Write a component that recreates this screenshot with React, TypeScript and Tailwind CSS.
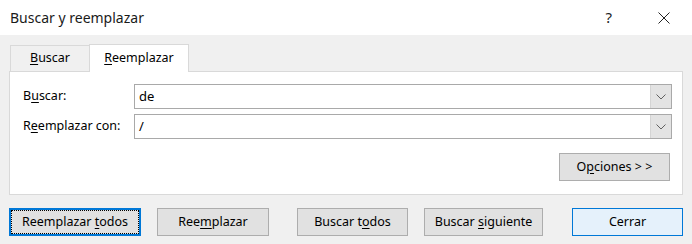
import React from 'react';

const font = { fontFamily: '"Noto Sans", "Open Sans", sans-serif' };

function Key({ children }: { children: React.ReactNode }) {
  return <span className="underline underline-offset-2">{children}</span>;
}

function Chevron() {
  return (
    <svg width="10" height="6" viewBox="0 0 10 6" fill="none">
      <path d="M0.5 0.5 L5 5 L9.5 0.5" stroke="#606060" strokeWidth="1" />
    </svg>
  );
}

function Combo({ value }: { value: string }) {
  return (
    <div className="flex h-[25px] flex-1 border border-[#a9a9a9] bg-white">
      <div className="flex flex-1 items-center pl-[4px] text-[13px] text-black">{value}</div>
      <div className="flex w-[21px] items-center justify-center border-l border-[#d4d4d4] bg-[#e3e3e3]">
        <Chevron />
      </div>
    </div>
  );
}

function Btn({
  children,
  className = '',
}: {
  children: React.ReactNode;
  className?: string;
}) {
  return (
    <div
      className={`flex h-[28px] items-center justify-center border border-[#adadad] bg-[#e1e1e1] text-[12.5px] text-black ${className}`}
    >
      {children}
    </div>
  );
}

export default function App() {
  return (
    <div className="flex h-[244px] w-[692px] flex-col bg-[#f0f0f0] text-black" style={font}>
      {/* Title bar */}
      <div className="flex h-[35px] items-center bg-white pl-[10px]">
        <span className="text-[14px] text-[#1a1a1a]">Buscar y reemplazar</span>
        <div className="ml-auto flex items-center">
          <span className="mr-[46px] text-[15px] text-[#222]">?</span>
          <svg className="mr-[22px]" width="12" height="12" viewBox="0 0 12 12">
            <path d="M0.5 0.5 L11.5 11.5 M11.5 0.5 L0.5 11.5" stroke="#222" strokeWidth="1" />
          </svg>
        </div>
      </div>

      <div className="flex flex-col px-[9px] pt-[9px]">
        {/* Tabs */}
        <div className="flex items-end pl-px">
          <div className="flex h-[26px] w-[79px] items-center justify-center border-l border-t border-[#d9d9d9] bg-[#f0f0f0] text-[12.5px]">
            <span>
              <Key>B</Key>uscar
            </span>
          </div>
          <div className="relative z-10 -mb-px flex h-[28px] w-[100px] items-center justify-center border border-b-0 border-[#d9d9d9] bg-white pb-px text-[12.5px]">
            <span>
              <Key>R</Key>eemplazar
            </span>
          </div>
        </div>

        {/* Panel */}
        <div className="flex h-[124px] w-[674px] flex-col border border-[#d9d9d9] bg-white pl-[13px] pr-[10px] pt-[12px]">
          <div className="flex items-center">
            <span className="w-[111px] text-[12.5px]">
              B<Key>u</Key>scar:
            </span>
            <Combo value="de" />
          </div>
          <div className="mt-[5px] flex items-center">
            <span className="w-[111px] text-[12.5px]">
              R<Key>e</Key>emplazar con:
            </span>
            <Combo value="/" />
          </div>
          <div className="mt-[14px] flex justify-end pr-[2px]">
            <Btn className="w-[111px]">
              <span>
                O<Key>p</Key>ciones &gt; &gt;
              </span>
            </Btn>
          </div>
        </div>

        {/* Bottom buttons */}
        <div className="mt-[13px] flex items-center">
          <div className="flex h-[28px] w-[132px] items-center justify-center border-2 border-[#0078d7] bg-[#e1e1e1] text-[12.5px]">
            <div className="flex h-full w-full items-center justify-center border border-dotted border-black">
              <span>
                Reemplazar <Key>t</Key>odos
              </span>
            </div>
          </div>
          <Btn className="ml-[16px] w-[112px]">
            <span>
              Ree<Key>m</Key>plazar
            </span>
          </Btn>
          <Btn className="ml-[28px] w-[111px]">
            <span>
              Buscar t<Key>o</Key>dos
            </span>
          </Btn>
          <Btn className="ml-[16px] w-[119px]">
            <span>
              Buscar <Key>s</Key>iguiente
            </span>
          </Btn>
          <div className="ml-[29px] flex h-[28px] w-[111px] items-center justify-center border border-[#0078d7] bg-[#e5f1fb] text-[12.5px]">
            Cerrar
          </div>
        </div>
      </div>
    </div>
  );
}
